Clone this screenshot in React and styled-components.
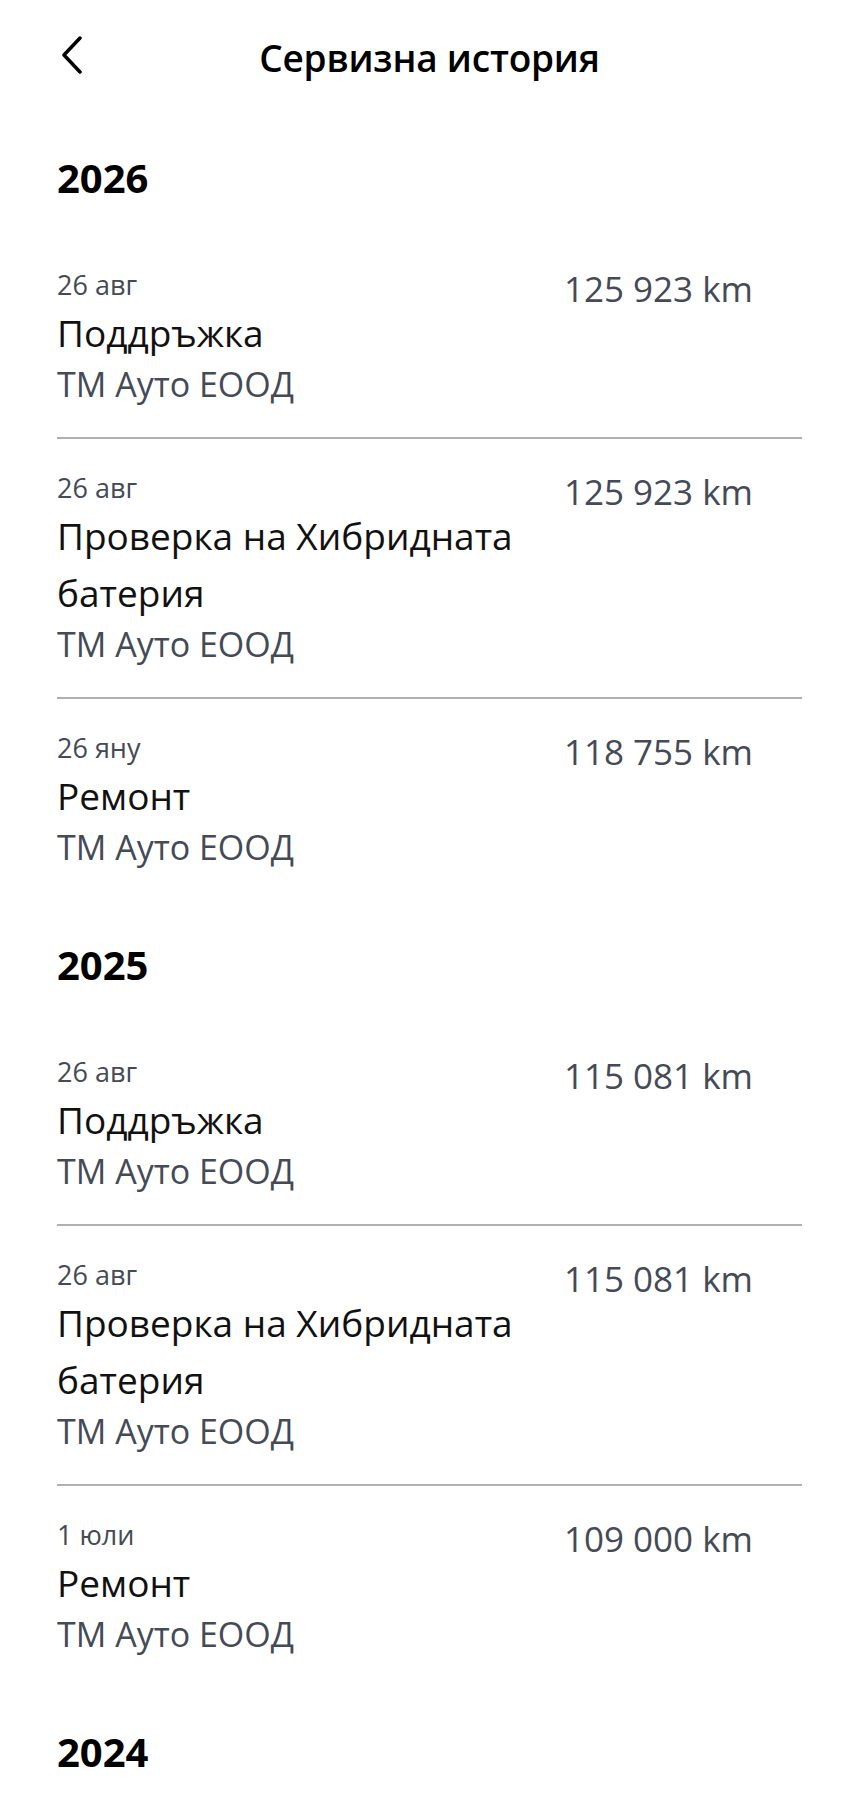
import { createGlobalStyle, styled } from 'styled-components';

const GlobalStyle = createGlobalStyle`
  html, body {
    margin: 0;
    padding: 0;
    background: #fff;
  }
  body {
    font-family: "Open Sans", "Noto Sans", sans-serif;
    color: #000;
    -webkit-font-smoothing: antialiased;
  }
`

const Page = styled.div`
  width: 100%;
  min-height: 1800px;
  background: #fff;
`
const Header = styled.header`
  display: grid;
  grid-template-columns: 1fr auto 1fr;
  align-items: center;
  padding-top: 30px;
  margin-bottom: 27px;
`
const BackButton = styled.button`
  justify-self: start;
  display: flex;
  align-items: center;
  margin: 0 0 6px 60px;
  padding: 0;
  border: none;
  background: none;
  cursor: pointer;
`
const HeaderTitle = styled.h1`
  margin: 0;
  font-size: 37px;
  line-height: 56px;
  font-weight: 600;
  letter-spacing: -0.2px;
`
const Content = styled.main`
  padding: 0 57px;
`
const Section = styled.section`
  padding-top: 42px;
`
const YearTitle = styled.h2`
  margin: 0 0 35px;
  font-size: 40px;
  line-height: 46px;
  font-weight: 700;
`
const Row = styled.div`
  display: flex;
  align-items: flex-start;
  justify-content: space-between;
  gap: 24px;
  padding: 30px 0;
  border-bottom: ${props => (props.$last ? 'none' : '2px solid #b0b0b0')};
`
const RowMain = styled.div`
  flex: 1;
  min-width: 0;
  display: flex;
  flex-direction: column;
`
const DateText = styled.span`
  font-size: 27px;
  line-height: 37px;
  margin-bottom: 1px;
  color: #444a56;
`
const ServiceName = styled.span`
  font-size: 37px;
  line-height: 57px;
  color: #111;
`
const Dealer = styled.span`
  font-size: 34px;
  line-height: 46px;
  color: #444a56;
`
const Mileage = styled.span`
  flex-shrink: 0;
  margin-right: 49px;
  font-size: 35px;
  line-height: 45px;
  color: #444a56;
  white-space: nowrap;
`

const history = [
  {
    year: '2026',
    items: [
      { date: '26 авг', name: 'Поддръжка', km: '125 923 km' },
      { date: '26 авг', name: 'Проверка на Хибридната батерия', km: '125 923 km' },
      { date: '26 яну', name: 'Ремонт', km: '118 755 km' },
    ],
  },
  {
    year: '2025',
    items: [
      { date: '26 авг', name: 'Поддръжка', km: '115 081 km' },
      { date: '26 авг', name: 'Проверка на Хибридната батерия', km: '115 081 km' },
      { date: '1 юли', name: 'Ремонт', km: '109 000 km' },
    ],
  },
  { year: '2024', items: [] },
]

function ChevronLeft() {
  return (
    <svg width="24" height="38" viewBox="0 0 24 38" fill="none">
      <polyline
        points="20,2 4,19 20,36"
        stroke="#000"
        strokeWidth="3.5"
        strokeLinecap="round"
        strokeLinejoin="round"
      />
    </svg>
  )
}

export default function App() {
  return (
    <Page>
      <GlobalStyle />
      <Header>
        <BackButton aria-label="Назад">
          <ChevronLeft />
        </BackButton>
        <HeaderTitle>Сервизна история</HeaderTitle>
        <span />
      </Header>
      <Content>
        {history.map(section => (
          <Section key={section.year}>
            <YearTitle>{section.year}</YearTitle>
            {section.items.map((item, i) => (
              <Row key={i} $last={i === section.items.length - 1}>
                <RowMain>
                  <DateText>{item.date}</DateText>
                  <ServiceName>{item.name}</ServiceName>
                  <Dealer>ТМ Ауто ЕООД</Dealer>
                </RowMain>
                <Mileage>{item.km}</Mileage>
              </Row>
            ))}
          </Section>
        ))}
      </Content>
    </Page>
  )
}
